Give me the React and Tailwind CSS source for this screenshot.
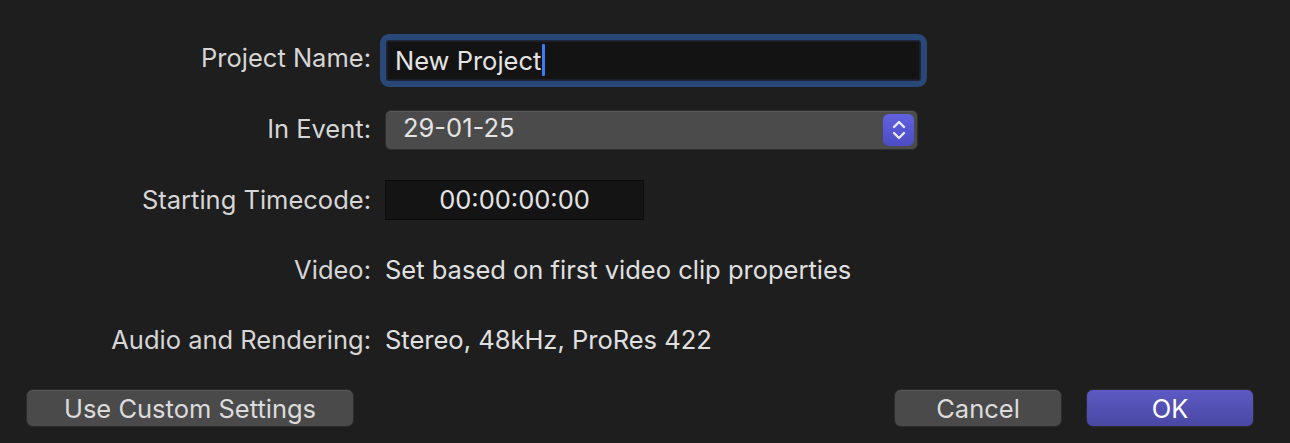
import React from "react";

const font = { fontFamily: "Inter, 'Noto Sans', 'Liberation Sans', sans-serif" };

function Row({ label, labelClass = "", children }) {
  return (
    <div className="flex items-center h-[70px]">
      <div className={`w-[372px] text-right text-[25.5px] text-[#d6d6d6] pr-[1px] ${labelClass}`}>{label}</div>
      <div className="flex-1 flex items-center pl-[13px]">{children}</div>
    </div>
  );
}

function Stepper() {
  return (
    <div className="w-[31px] h-[32px] rounded-[6px] bg-gradient-to-b from-[#6262e0] to-[#4c4cc4] flex items-center justify-center">
      <svg width="16" height="22" viewBox="0 0 16 22" fill="none" stroke="#e8e8ff" strokeWidth="2.4" strokeLinecap="round" strokeLinejoin="round">
        <path d="M3 8 L8 3 L13 8" />
        <path d="M3 14 L8 19 L13 14" />
      </svg>
    </div>
  );
}

export default function App() {
  return (
    <div className="w-[1290px] h-[443px] bg-[#1e1e1e] pt-[25px] select-none" style={font}>
      <Row label="Project Name:" labelClass="-mt-[4px]">
        <div className="-ml-[5px] w-[547px] h-[53px] rounded-[9px] border-[6px] border-[#2a4877] bg-[#1d2638] p-[1px]">
          <div className="h-full bg-[#131313] border border-[#1a1f29] flex items-center pl-[7px] text-[25.5px] text-[#e4e4e4]">
            <span className="mt-[2px]">New Project</span>
            <span className="inline-block w-[3px] h-[32px] bg-[#3b7cf0] ml-[1px] rounded-[1px]" />
          </div>
        </div>
      </Row>
      <Row label="In Event:" labelClass="-mt-[2px]">
        <div className="w-[533px] h-[40px] -mt-[1px] rounded-[6px] bg-[#4b4b4b] border border-[#2e2e2e] shadow-[inset_0_1px_0_rgba(255,255,255,0.08)] flex items-center justify-between pl-[17px] pr-[3px] text-[25.5px] text-[#e4e4e4]">
          <span className="-mt-[3px]">29-01-25</span>
          <Stepper />
        </div>
      </Row>
      <Row label="Starting Timecode:">
        <div className="w-[259px] h-[40px] bg-[#141414] border border-[#0b0b0b] flex items-center justify-center text-[25.5px] text-[#e4e4e4]">
          00:00:00:00
        </div>
      </Row>
      <Row label="Video:">
        <span className="text-[25.5px] text-[#e0e0e0]">Set based on first video clip properties</span>
      </Row>
      <Row label="Audio and Rendering:">
        <span className="text-[25.5px] text-[#e0e0e0]">Stereo, 48kHz, ProRes 422</span>
      </Row>
      <div className="flex items-center mt-[14px] pl-[26px] pr-[36px]">
        <button className="w-[328px] h-[38px] rounded-[7px] bg-[#4a4a4a] border border-[#2b2b2b] shadow-[inset_0_1px_0_rgba(255,255,255,0.08)] text-[25.5px] text-[#dcdcdc]">
          Use Custom Settings
        </button>
        <div className="flex-1" />
        <button className="w-[168px] h-[38px] rounded-[7px] bg-[#4a4a4a] border border-[#2b2b2b] shadow-[inset_0_1px_0_rgba(255,255,255,0.08)] text-[25.5px] text-[#dcdcdc]">
          Cancel
        </button>
        <button className="ml-[24px] w-[168px] h-[38px] rounded-[7px] bg-gradient-to-b from-[#5d5ac4] to-[#4a48a4] border border-[#2b2b2b] text-[25.5px] text-white">
          OK
        </button>
      </div>
    </div>
  );
}
